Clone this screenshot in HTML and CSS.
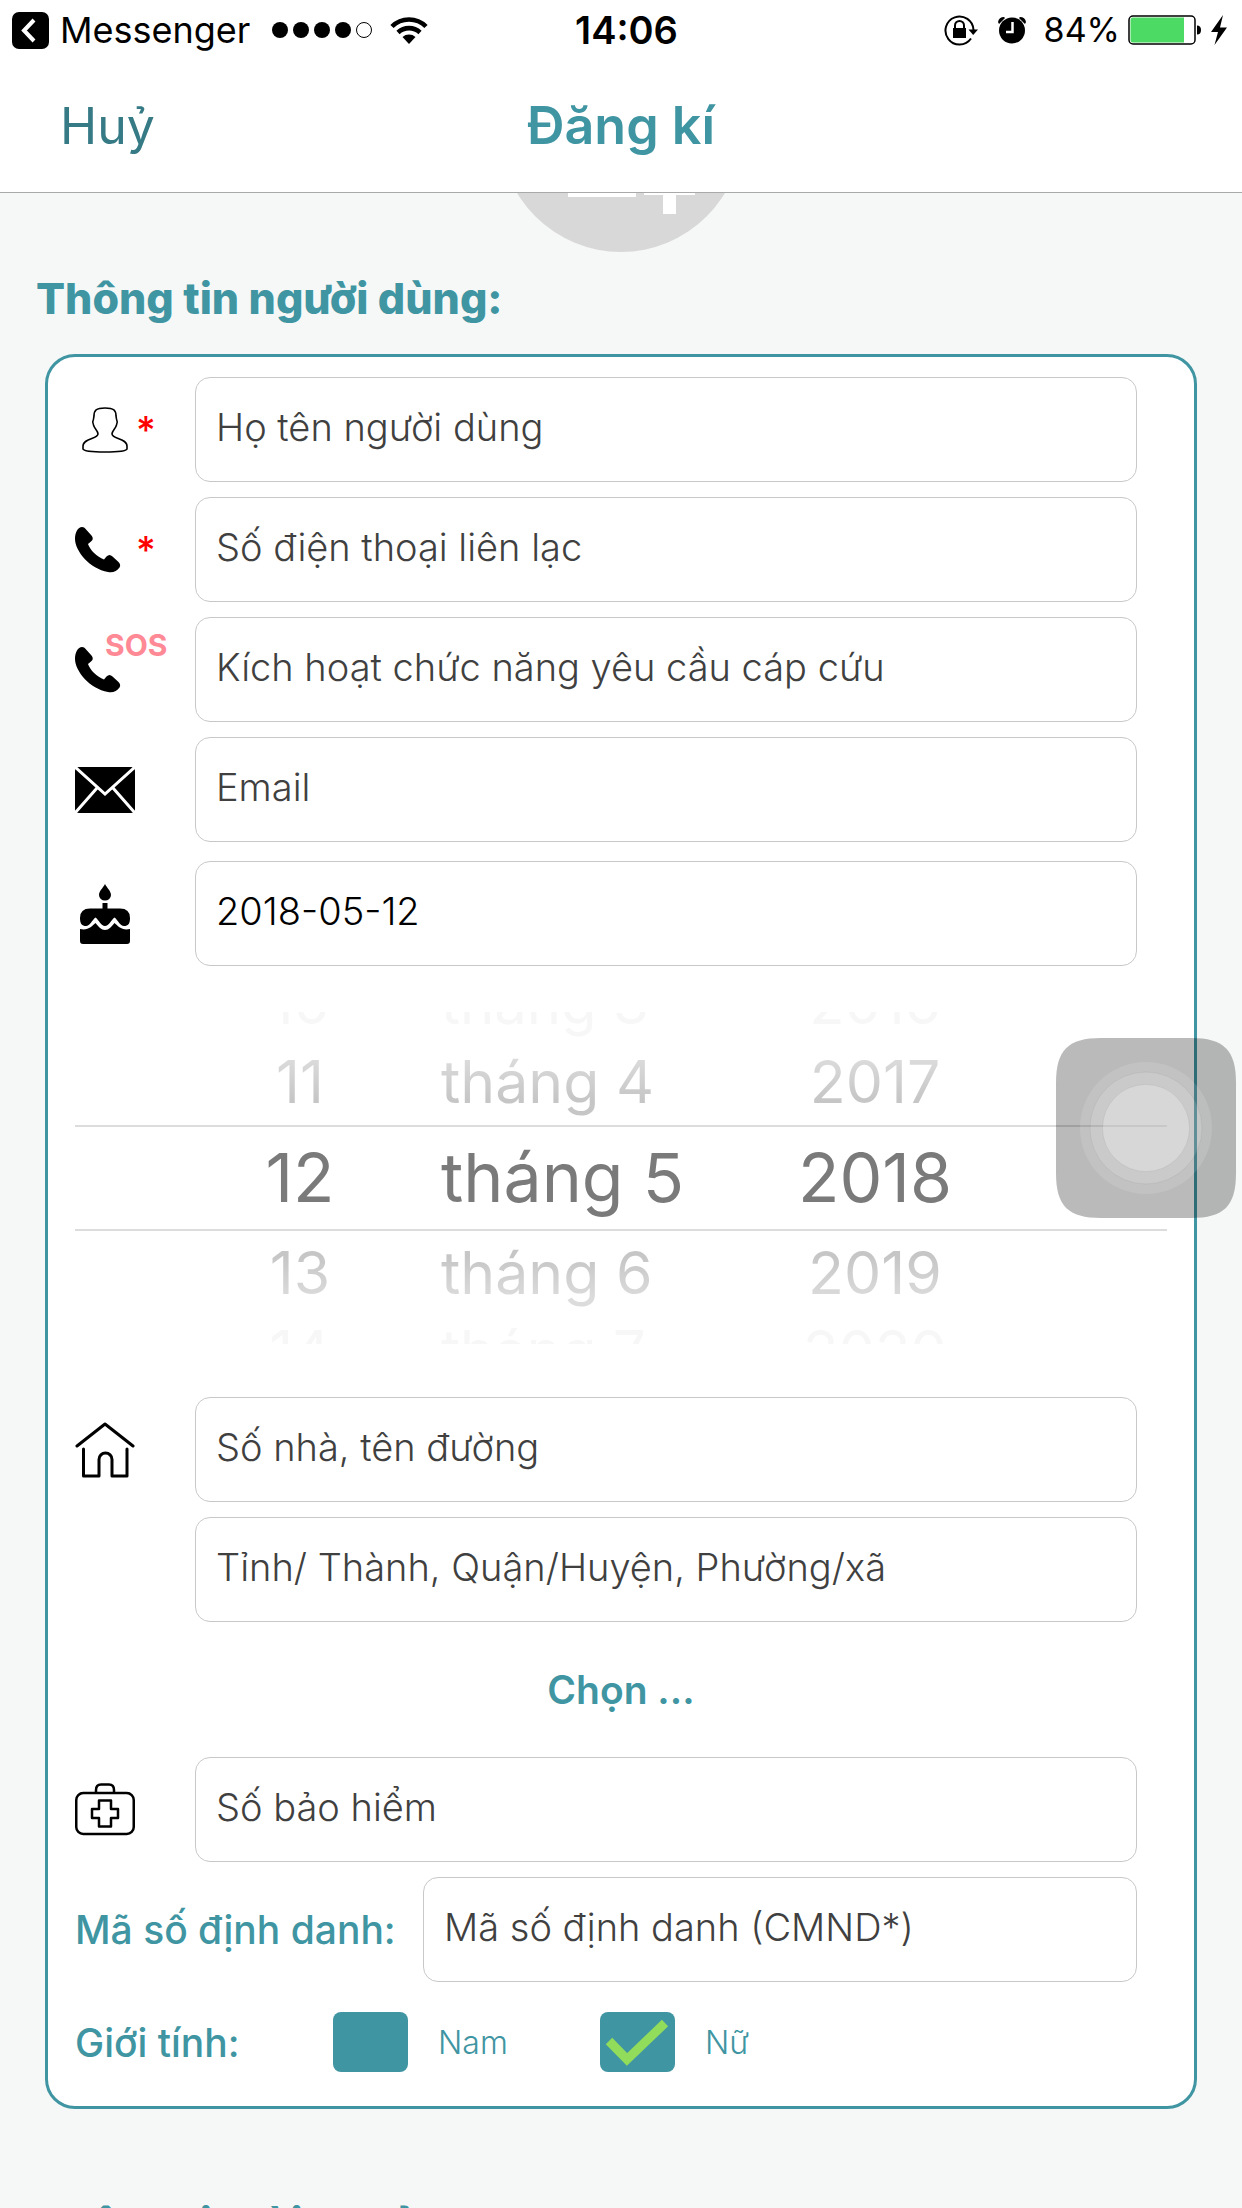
FILE: index.html
```
<!DOCTYPE html>
<html lang="vi">
<head>
<meta charset="utf-8">
<meta name="viewport" content="width=device-width, initial-scale=1">
<title>Đăng kí</title>
<link rel="stylesheet" href="styles.css">
</head>
<body>
<div class="app">
  <header class="header">
    <div class="status">
      <div class="status-side">
        <svg class="back-icon" width="37" height="37" viewBox="0 0 37 37"><rect width="37" height="37" rx="7"/><path d="M22 8 12 18.500 22 29" fill="none" stroke="#fff" stroke-width="4"/></svg>
        <span class="back-app">Messenger</span>
        <svg class="signal" width="101" height="18" viewBox="0 0 101 18"><circle cx="8" cy="9" r="8"/><circle cx="29" cy="9" r="8"/><circle cx="50" cy="9" r="8"/><circle cx="71" cy="9" r="8"/><circle cx="92" cy="9" r="7.500" fill="none" stroke="#000"/></svg>
        <svg width="38" height="28" viewBox="0 0 38 28"><path d="M2 10.500A24 24 0 0 1 36 10.500M8 16.500A16 16 0 0 1 30 16.500" fill="none" stroke="#000" stroke-width="4.600"/><path d="M12.500 21A10 10 0 0 1 25.500 21L19 28Z"/></svg>
      </div>
      <time class="clock">14:06</time>
      <div class="status-side status-right">
        <svg class="lock" width="35" height="32" viewBox="0 0 35 32"><path d="M27 24.500A14 14 0 1 1 29.500 16" fill="none" stroke="#000" stroke-width="2"/><path d="M24.500 15.500H34L29.200 21Z"/><rect x="9" y="14" width="13" height="10"/><path d="M11 15V11.500a4.500 4.500 0 0 1 9 0V15" fill="none" stroke="#000" stroke-width="2"/></svg>
        <svg class="alarm" width="28" height="28" viewBox="0 0 28 28"><circle cx="14" cy="14.500" r="13"/><path d="M0 6Q1 1 6 1L7 2 1 8ZM28 6Q27 1 22 1L21 2 27 8Z"/><path d="M14.500 6V16H8" fill="none" stroke="#fff" stroke-width="2.500"/></svg>
        <span class="percent">84%</span>
        <svg width="74" height="30" viewBox="0 0 74 30"><rect x="1" y="1" width="66" height="28" rx="4" fill="#fff" stroke="#000" stroke-width="1.500"/><path d="M5 2.500H56V27.500H5Q2.500 27.500 2.500 25V5Q2.500 2.500 5 2.500Z" fill="#4cd964"/><path d="M69 10.500q4 0 4 4.500t-4 4.500Z"/></svg>
        <svg class="bolt" width="16" height="30" viewBox="0 0 16 30"><path d="M12 0 0 17H7L3.500 30 16 12.500H9Z"/></svg>
      </div>
    </div>
    <nav class="nav">
      <button class="cancel" type="button">Huỷ</button>
      <h1 class="title">Đăng kí</h1>
    </nav>
  </header>

  <main class="content">
    <svg class="avatar" width="242" height="242" viewBox="0 0 242 242"><circle cx="121" cy="121" r="121" fill="#d8d8d8"/><path d="M68 176H136V187H68ZM144 174H163V156H176V174H195V185H176V204H163V185H144Z" fill="#fff"/></svg>
    <form>
      <h2 class="section-title">Thông tin người dùng:</h2>
      <div class="card">
        <div class="row">
          <label class="row-label" for="name" aria-label="Họ tên">
            <span class="icon-box"><svg width="46" height="46" viewBox="0 0 46 46" fill="none" stroke="#000" stroke-width="1.600"><path d="M23 1C14 1 12 3.500 12 9L11.500 12C10.500 14 10.500 16 11.500 18C12.500 22 16 23.500 16 27C16 32 1 31 1 39V42Q2 45 23 45T45 42V39C45 31 30 32 30 27C30 23.500 33.500 22 34.500 18C35.500 16 35.500 14 34.500 12L34 9C34 3.500 32 1 23 1Z"/></svg></span>
            <span class="required">*</span>
          </label>
          <input class="field" id="name" type="text" placeholder="Họ tên người dùng">
        </div>
        <div class="row">
          <label class="row-label" for="phone" aria-label="Số điện thoại">
            <span class="icon-box icon-start"><svg width="46" height="46" viewBox="0 0 46 46"><path d="M0 12C0 5 3 0 7 0C9 0 10 1 11.500 3L16.500 8.500C18.500 11 18 13 16 14.500L13 17C15 23 22 30 29 32.500L31.500 29.500C33.500 27.500 35.500 27.500 37.500 29.500L43.500 35C45.500 37 45.500 39 44.500 40.500C42 44 38 46 33 45C15 42 0 24 0 12Z"/></svg></span>
            <span class="required">*</span>
          </label>
          <input class="field" id="phone" type="tel" placeholder="Số điện thoại liên lạc">
        </div>
        <div class="row">
          <label class="row-label" for="sos">
            <span class="icon-box icon-start"><svg width="46" height="46" viewBox="0 0 46 46"><path d="M0 12C0 5 3 0 7 0C9 0 10 1 11.500 3L16.500 8.500C18.500 11 18 13 16 14.500L13 17C15 23 22 30 29 32.500L31.500 29.500C33.500 27.500 35.500 27.500 37.500 29.500L43.500 35C45.500 37 45.500 39 44.500 40.500C42 44 38 46 33 45C15 42 0 24 0 12Z"/></svg></span>
            <span class="sos">SOS</span>
          </label>
          <input class="field" id="sos" type="tel" placeholder="Kích hoạt chức năng yêu cầu cáp cứu">
        </div>
        <div class="row">
          <label class="row-label" for="email" aria-label="Email">
            <span class="icon-box"><svg width="60" height="46" viewBox="0 0 60 46"><rect width="60" height="46" rx="4"/><path d="M0 0 30 27 60 0M0 46 22 21M60 46 38 21" fill="none" stroke="#fff" stroke-width="3"/></svg></span>
          </label>
          <input class="field" id="email" type="email" placeholder="Email">
        </div>
        <div class="row row-date">
          <label class="row-label" for="birthday" aria-label="Ngày sinh">
            <span class="icon-box"><svg width="50" height="60" viewBox="0 0 50 60"><path d="M25 0C27 4 31 7 31 11A6 5.500 0 0 1 19 11C19 7 23 4 25 0Z"/><path d="M22.500 19H27.500V24.500H40Q50 24.500 50 34C50 40 48 42 44 42C40 42 38 36 34.500 33.500C31 36 29 42 25 42S19 36 15.500 33.500C12 36 10 42 6 42C2 42 0 40 0 34Q0 24.500 10 24.500H22.500Z"/><path d="M0 45C8 47 12 42 15.500 39C19 43 21 46 25 46S31 43 34.500 39C38 42 42 47 50 45V57Q50 60 47 60H3Q0 60 0 57Z"/></svg></span>
          </label>
          <input class="field" id="birthday" type="text" value="2018-05-12">
        </div>

        <div class="picker" role="group" aria-label="Ngày sinh">
          <div class="picker-row picker-far picker-first"><span class="day">10</span><span>tháng 3</span><span class="year">2016</span></div>
          <div class="picker-row picker-near"><span class="day">11</span><span>tháng 4</span><span class="year">2017</span></div>
          <div class="picker-row picker-selected"><span class="day">12</span><span>tháng 5</span><span class="year">2018</span></div>
          <div class="picker-row picker-near picker-below"><span class="day">13</span><span>tháng 6</span><span class="year">2019</span></div>
          <div class="picker-row picker-far"><span class="day">14</span><span>tháng 7</span><span class="year">2020</span></div>
        </div>

        <div class="row">
          <label class="row-label" for="street" aria-label="Địa chỉ">
            <span class="icon-box"><svg width="60" height="56" viewBox="0 0 60 56" fill="none" stroke="#000" stroke-width="3" stroke-linecap="round" stroke-linejoin="round"><path d="M2 24 30 2 58 24M8.500 27V54H24V37.500A6.500 6.500 0 0 1 37 37.500V54H52V27"/></svg></span>
          </label>
          <input class="field" id="street" type="text" placeholder="Số nhà, tên đường">
        </div>
        <div class="row">
          <label class="row-label" for="area" aria-label="Khu vực"></label>
          <input class="field" id="area" type="text" placeholder="Tỉnh/ Thành, Quận/Huyện, Phường/xã">
        </div>
        <button class="choose" type="button">Chọn ...</button>
        <div class="row">
          <label class="row-label" for="insurance" aria-label="Số bảo hiểm">
            <span class="icon-box"><svg width="60" height="54" viewBox="0 0 60 54" fill="none" stroke="#000" stroke-width="2.500" stroke-linejoin="round"><rect x="1.250" y="10" width="57.500" height="41" rx="7"/><path d="M21 10V7Q21 1.500 26 1.500H34Q39 1.500 39 7V10M24 17.500H36V26H43V35H36V43.500H24V35H17V26H24Z"/></svg></span>
          </label>
          <input class="field" id="insurance" type="text" placeholder="Số bảo hiểm">
        </div>
        <div class="row">
          <label class="text-label id-label" for="idnum">Mã số định danh:</label>
          <input class="field" id="idnum" type="text" placeholder="Mã số định danh (CMND*)">
        </div>
        <div class="gender" role="group" aria-labelledby="gender-label">
          <span class="text-label gender-label" id="gender-label">Giới tính:</span>
          <label class="option"><input class="check" type="checkbox"><span>Nam</span></label>
          <label class="option"><span class="check-wrap"><input class="check" type="checkbox" checked><svg class="tick" width="75" height="60" viewBox="0 0 75 60"><path d="M9 29 27 47.500 65 11" fill="none" stroke="#91dc5a" stroke-width="9"/></svg></span><span>Nữ</span></label>
        </div>
      </div>
      <h2 class="section-title">Thông tin tài khoản:</h2>
    </form>
  </main>

  <button class="touch" type="button" aria-label="AssistiveTouch">
    <svg width="180" height="180" viewBox="0 0 180 180"><path d="M0 45C0 12 12 0 45 0H135C168 0 180 12 180 45V135C180 168 168 180 135 180H45C12 180 0 168 0 135Z" fill="#000" fill-opacity=".27"/><g fill="#fff"><circle cx="90" cy="90" r="66" fill-opacity=".12"/><circle cx="90" cy="90" r="56" fill-opacity=".14" stroke="#000" stroke-opacity=".05"/><circle cx="90" cy="90" r="43.500" fill-opacity=".25" stroke="#000" stroke-opacity=".05"/></g></svg>
  </button>
</div>
</body>
</html>
```
FILE: styles.css
```
* { box-sizing: border-box; }

body {
  margin: 0;
  background: #f6f8f7;
  color: #000;
  font-family: Inter, "Liberation Sans", sans-serif;
}

svg { display: block; flex: none; }

button, input { font-family: inherit; }

button { border: 0; padding: 0; background: none; cursor: pointer; }

.app {
  position: relative;
  display: flex;
  flex-direction: column;
  height: 100vh;
  overflow: hidden;
}

/* header */
.header {
  position: relative;
  z-index: 1;
  flex: none;
  background: #fff;
  border-bottom: 1px solid #a8a9a9;
}

.status {
  display: grid;
  grid-template-columns: 1fr auto 1fr;
  align-items: center;
  height: 60px;
  padding: 0 15px 0 12px;
  font-size: 36px;
  line-height: 60px;
}

.status-side { display: flex; align-items: center; }
.status-right { justify-content: flex-end; }
.back-icon { margin-right: 11px; }
.signal { margin: 0 17px 0 22px; }
.clock { padding-left: 14px; font-size: 38px; font-weight: 600; }
.lock { margin-right: 19px; }
.alarm { margin-right: 18px; }
.percent { margin-right: 8px; font-size: 34px; }
.bolt { margin-left: 9px; }

.nav {
  display: grid;
  grid-template-columns: 1fr auto 1fr;
  align-items: center;
  height: 132px;
  padding: 0 60px;
}

.cancel {
  justify-self: start;
  color: #357a85;
  font-size: 50px;
  line-height: 132px;
}

.title {
  margin: 0;
  color: #4095a2;
  font-size: 52px;
  font-weight: 600;
  line-height: 132px;
}

/* scrolling content */
.content {
  flex: 1;
  min-height: 0;
  overflow-y: auto;
  scrollbar-width: none;
}

.avatar { margin: -183px auto 0; }

.section-title {
  margin: 15px 36px 25px;
  color: #4095a2;
  font-size: 43px;
  font-weight: 800;
  line-height: 62px;
}

.card {
  margin: 0 45px 83px;
  padding: 20px 57px 34px 27px;
  background: #fff;
  border: 3px solid #4095a2;
  border-radius: 30px;
}

.row {
  display: flex;
  align-items: center;
  margin-bottom: 15px;
}

.row-date { margin: 19px 0 0; }

.row-label {
  display: flex;
  align-items: center;
  flex: none;
  width: 120px;
}

.icon-box { display: flex; justify-content: center; width: 60px; }
.icon-start { justify-content: flex-start; }

.required {
  padding-left: 1px;
  color: #f00;
  font-size: 38px;
  font-weight: 500;
}

.sos {
  align-self: flex-start;
  margin: -17px 0 0 -30px;
  color: #ff8a96;
  font-size: 30px;
  font-weight: 700;
  line-height: 30px;
}

.field {
  flex: 1;
  min-width: 0;
  height: 105px;
  padding: 0 20px 5px;
  border: 1px solid #c8c8c8;
  border-radius: 15px;
  background: #fff;
  color: #000;
  font-size: 38px;
  font-weight: 300;
}

.field::placeholder { color: #404040; opacity: 1; }

/* date wheel */
.picker {
  margin: 46px -30px 53px 0;
}

.picker-row {
  display: grid;
  grid-template-columns: 154fr 270fr 200fr;
  column-gap: 64px;
  align-items: center;
  padding: 0 192px 2px 148px;
  overflow: hidden;
  white-space: nowrap;
}

.day, .year { text-align: center; }

.picker-near {
  height: 85px;
  color: transparent;
  background: linear-gradient(#dcdcdc 20%, #c6c6c6 70%);
  background-clip: text;
  font-size: 59px;
}

.picker-below { background: linear-gradient(#c6c6c6 30%, #dcdcdc 80%); background-clip: text; }

.picker-far {
  height: 28px;
  align-content: start;
  color: #f7f7f7;
  font-size: 58px;
  line-height: 70px;
}

.picker-first { align-content: end; }

.picker-selected {
  height: 106px;
  border-top: 2px solid #dcdcdc;
  border-bottom: 2px solid #dcdcdc;
  color: #7a7a7a;
  font-size: 68px;
}

.choose {
  display: block;
  width: 100%;
  height: 105px;
  margin-bottom: 15px;
  padding: 0 0 0 30px;
  color: #4095a2;
  font-size: 39px;
  font-weight: 600;
}

.text-label {
  flex: none;
  color: #4095a2;
  font-size: 39px;
  font-weight: 500;
}

.id-label { width: 348px; }

.gender {
  display: flex;
  align-items: center;
  padding-top: 15px;
}

.gender-label { width: 258px; }

.option {
  display: flex;
  align-items: center;
  gap: 30px;
  width: 267px;
  color: #4095a2;
  font-size: 32px;
  font-weight: 300;
}

.check {
  display: block;
  appearance: none;
  width: 75px;
  height: 60px;
  margin: 0;
  border-radius: 8px;
  background: #4095a2;
}

.check-wrap { position: relative; }
.tick { position: absolute; inset: 0; pointer-events: none; }

/* floating system button */
.touch {
  position: absolute;
  z-index: 2;
  top: 1038px;
  right: 6px;
}
```
